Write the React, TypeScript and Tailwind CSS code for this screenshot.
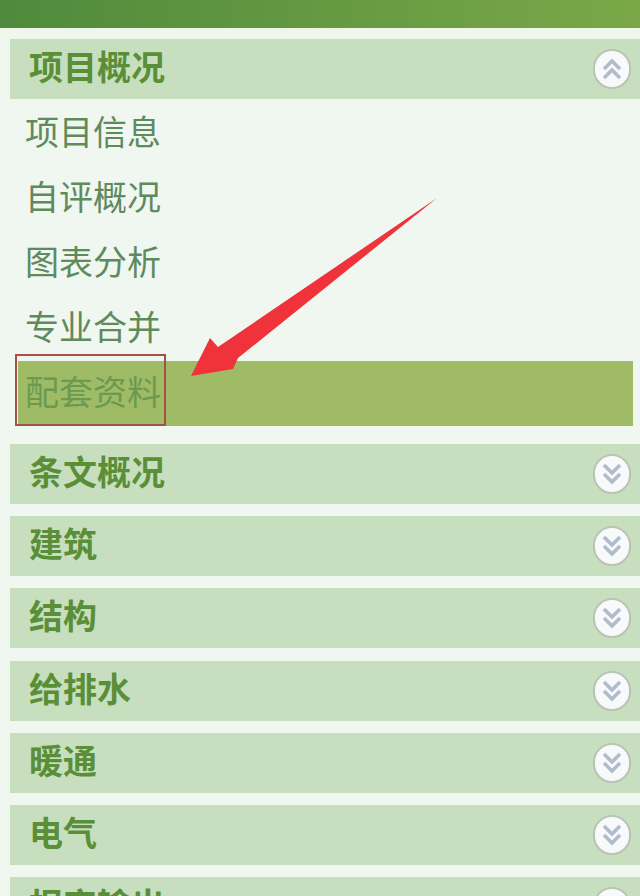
import React from 'react';

const font = { fontFamily: '"Noto Sans CJK SC", sans-serif' };

const RoundToggle = ({ open }: { open?: boolean }) => (
  <span className="flex h-[40px] w-[38px] items-center justify-center rounded-full border-2 border-[#b9c4b6] bg-[#f7f9fb]">
    <svg width="20" height="24" viewBox="0 0 20 24" fill="none" stroke="#b0bccb" strokeWidth="3.5" className={open ? 'rotate-180' : ''}>
      <path d="M2 3l8 8 8-8" />
      <path d="M2 12l8 8 8-8" />
    </svg>
  </span>
);

const Header = ({ title, open }: { title: string; open?: boolean }) => (
  <div className="ml-[10px] flex h-[60px] shrink-0 items-center justify-between bg-[#c7dfbf] pl-[19px] pr-[9px]">
    <span className="mb-[6px] text-[34px] font-bold leading-none text-[#5a8f38]">{title}</span>
    <RoundToggle open={open} />
  </div>
);

const subItems = ['项目信息', '自评概况', '图表分析', '专业合并'];
const sections = ['条文概况', '建筑', '结构', '给排水', '暖通', '电气', '报审输出'];

export default function App() {
  return (
    <div className="relative h-[896px] w-[640px] overflow-hidden bg-[#f0f6f0]" style={font}>
      <div className="h-[28px] bg-gradient-to-r from-[#4f8a3c] to-[#7aa848]" />
      <div className="h-[11px] bg-[#eef7ea]" />
      <Header title="项目概况" open />
      <div className="pt-[2px]">
        {subItems.map((s) => (
          <div key={s} className="flex h-[65px] items-center pb-[5px] pl-[25px] text-[34px] leading-none text-[#5f8a5c]">
            {s}
          </div>
        ))}
        <div className="ml-[18px] mr-[7px] flex h-[65px] items-center bg-[#a0bb66] pb-[5px] pl-[7px] text-[34px] leading-none text-[#6a9a50]">
          配套资料
        </div>
      </div>
      <div className="mt-[18px] flex flex-col gap-[12.2px]">
        {sections.map((s) => (
          <Header key={s} title={s} />
        ))}
      </div>

      {/* annotation drawn on top of the screenshot */}
      <div className="absolute left-[15px] top-[354px] h-[72px] w-[151px] border-2 border-[#a5504a]" />
      <svg className="absolute left-0 top-0" width="640" height="896" viewBox="0 0 640 896" fill="none">
        <path d="M437 198L238 358L233 369L191 376L210 338L218 347Z" fill="#f0323a" />
      </svg>
    </div>
  );
}
